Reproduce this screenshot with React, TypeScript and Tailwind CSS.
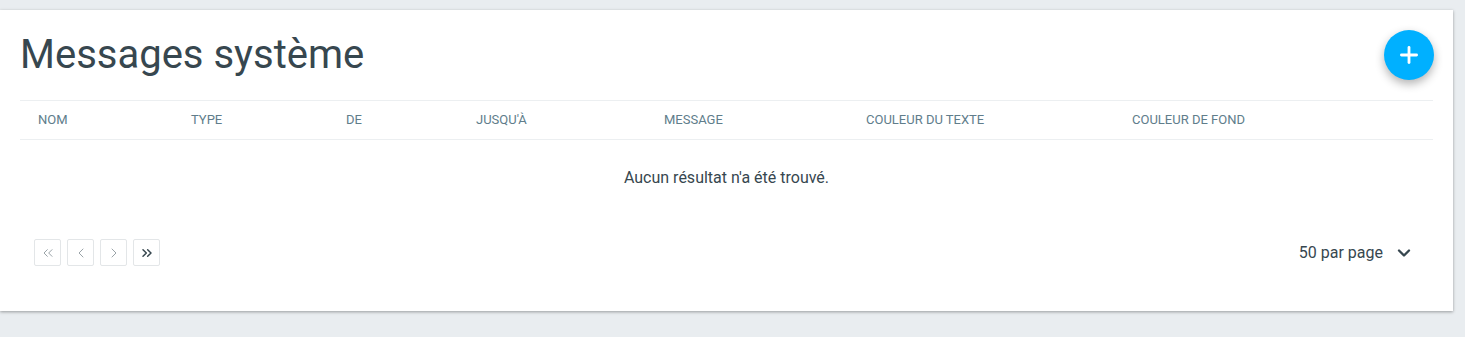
import { ChevronDown, ChevronLeft, ChevronRight, ChevronsLeft, ChevronsRight, Plus } from 'lucide-react';

// Column headers with their widths in the table
const columns: { label: string; width: string }[] = [
  { label: 'Nom', width: 'w-[153px]' },
  { label: 'Type', width: 'w-[155px]' },
  { label: 'De', width: 'w-[130px]' },
  { label: "Jusqu'à", width: 'w-[188px]' },
  { label: 'Message', width: 'w-[202px]' },
  { label: 'Couleur du texte', width: 'w-[266px]' },
  { label: 'Couleur de fond', width: 'flex-1' },
];

function PagerButton({ children, active }: { children: React.ReactNode; active?: boolean }) {
  return (
    <button
      className={`flex h-[27px] w-[27px] items-center justify-center rounded-[2px] border border-[#e3e6e8] bg-white ${
        active ? 'text-[#37474f]' : 'text-[#9aa3a8]'
      }`}
    >
      {children}
    </button>
  );
}

export default function App() {
  return (
    <div className="min-h-[337px] bg-[#e9edf0] pt-[10px] font-['Roboto',sans-serif]">
      <div className="w-[1453px] bg-white px-5 pb-[45px] pt-[18px] shadow-[0_1px_3px_rgba(0,0,0,0.35)]">
        {/* Header */}
        <div className="flex h-[72px] items-start justify-between">
          <h1 className="pt-[1px] text-[40px] leading-[52px] text-[#37474f]">Messages système</h1>
          <button className="mr-[-1px] mt-[2px] flex h-[50px] w-[50px] items-center justify-center rounded-full bg-[#00b0ff] text-white shadow-[0_4px_10px_rgba(0,0,0,0.3)]">
            <Plus size={26} strokeWidth={2.6} />
          </button>
        </div>

        {/* Table */}
        <div className="border-t border-[#eceff1]">
          <div className="flex h-[39px] items-center border-b border-[#eceff1]">
            {columns.map((c) => (
              <div key={c.label} className={`${c.width} pl-[18px] text-[13px] uppercase text-[#607d8b]`}>
                {c.label}
              </div>
            ))}
          </div>
          <div className="flex h-[99px] items-start justify-center pt-[26px] text-[16px] leading-[24px] text-[#37474f]">
            Aucun résultat n'a été trouvé.
          </div>
        </div>

        {/* Footer / pagination */}
        <div className="flex items-center justify-between pl-[14px] pr-[19px]">
          <div className="flex gap-[6px]">
            <PagerButton>
              <ChevronsLeft size={16} strokeWidth={1.5} />
            </PagerButton>
            <PagerButton>
              <ChevronLeft size={16} strokeWidth={1.5} />
            </PagerButton>
            <PagerButton>
              <ChevronRight size={16} strokeWidth={1.5} />
            </PagerButton>
            <PagerButton active>
              <ChevronsRight size={16} strokeWidth={2.2} />
            </PagerButton>
          </div>
          <div className="flex items-center gap-[11px] text-[16px] text-[#37474f]">
            <span>50 par page</span>
            <ChevronDown size={20} strokeWidth={2.8} />
          </div>
        </div>
      </div>
    </div>
  );
}
